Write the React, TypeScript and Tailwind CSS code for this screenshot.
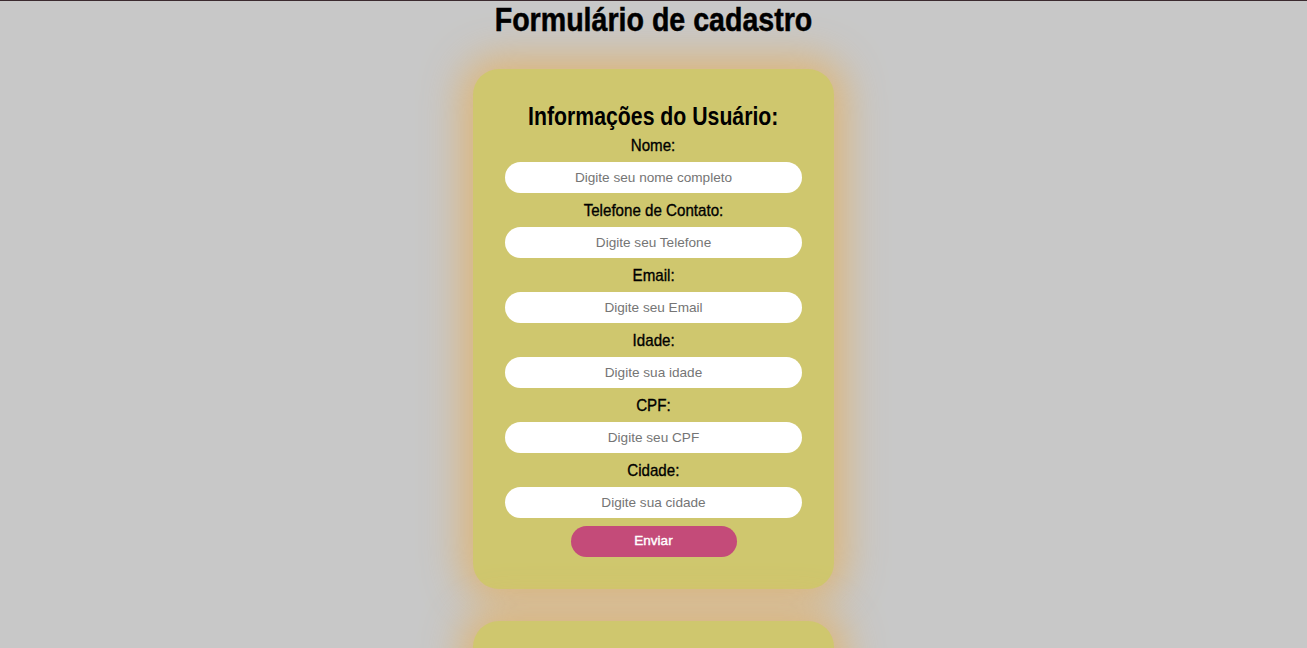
const fields = [
  { label: "Nome:", placeholder: "Digite seu nome completo" },
  { label: "Telefone de Contato:", placeholder: "Digite seu Telefone" },
  { label: "Email:", placeholder: "Digite seu Email" },
  { label: "Idade:", placeholder: "Digite sua idade" },
  { label: "CPF:", placeholder: "Digite seu CPF" },
  { label: "Cidade:", placeholder: "Digite sua cidade" },
];

function UserForm() {
  return (
    <form className="flex w-[361px] flex-col items-center rounded-[26px] bg-[#cfc76e] px-8 pt-[33px] pb-[32px] shadow-[0_0_38px_12px_rgba(226,178,104,0.8)]">
      <h2 className="mb-[6px] scale-x-[0.85] font-['Liberation_Sans',Arial,sans-serif] text-[25px] font-bold leading-[28px] text-black">
        Informações do Usuário:
      </h2>
      {fields.map((f) => (
        <div key={f.label} className="flex w-full flex-col items-center">
          <label className="mb-[6px] scale-x-[0.89] font-['Liberation_Sans',Arial,sans-serif] text-[17px] leading-[20px] text-black [-webkit-text-stroke:0.35px_black]">
            {f.label}
          </label>
          <input
            type="text"
            placeholder={f.placeholder}
            className="mb-[8px] h-[31px] w-full rounded-full bg-white text-center font-['Liberation_Sans',Arial,sans-serif] text-[13.6px] text-black outline-none placeholder:text-[#757575]"
          />
        </div>
      ))}
      <button
        type="button"
        className="h-[31px] w-[166px] rounded-full bg-[#c44b79] font-['Liberation_Sans',Arial,sans-serif] text-[13.5px] text-white [-webkit-text-stroke:0.4px_white]"
      >
        Enviar
      </button>
    </form>
  );
}

export default function App() {
  return (
    <div className="min-h-[648px] border-t border-[#3b2a2f] bg-[#c8c8c8]">
      <h1 className="scale-x-[0.866] text-center font-['Liberation_Sans',Arial,sans-serif] text-[33px] font-bold leading-[37px] text-black [-webkit-text-stroke:0.5px_black]">
        Formulário de cadastro
      </h1>
      <div className="mt-[31px] flex flex-col items-center gap-[32px] pb-10">
        <UserForm />
        <UserForm />
      </div>
    </div>
  );
}
